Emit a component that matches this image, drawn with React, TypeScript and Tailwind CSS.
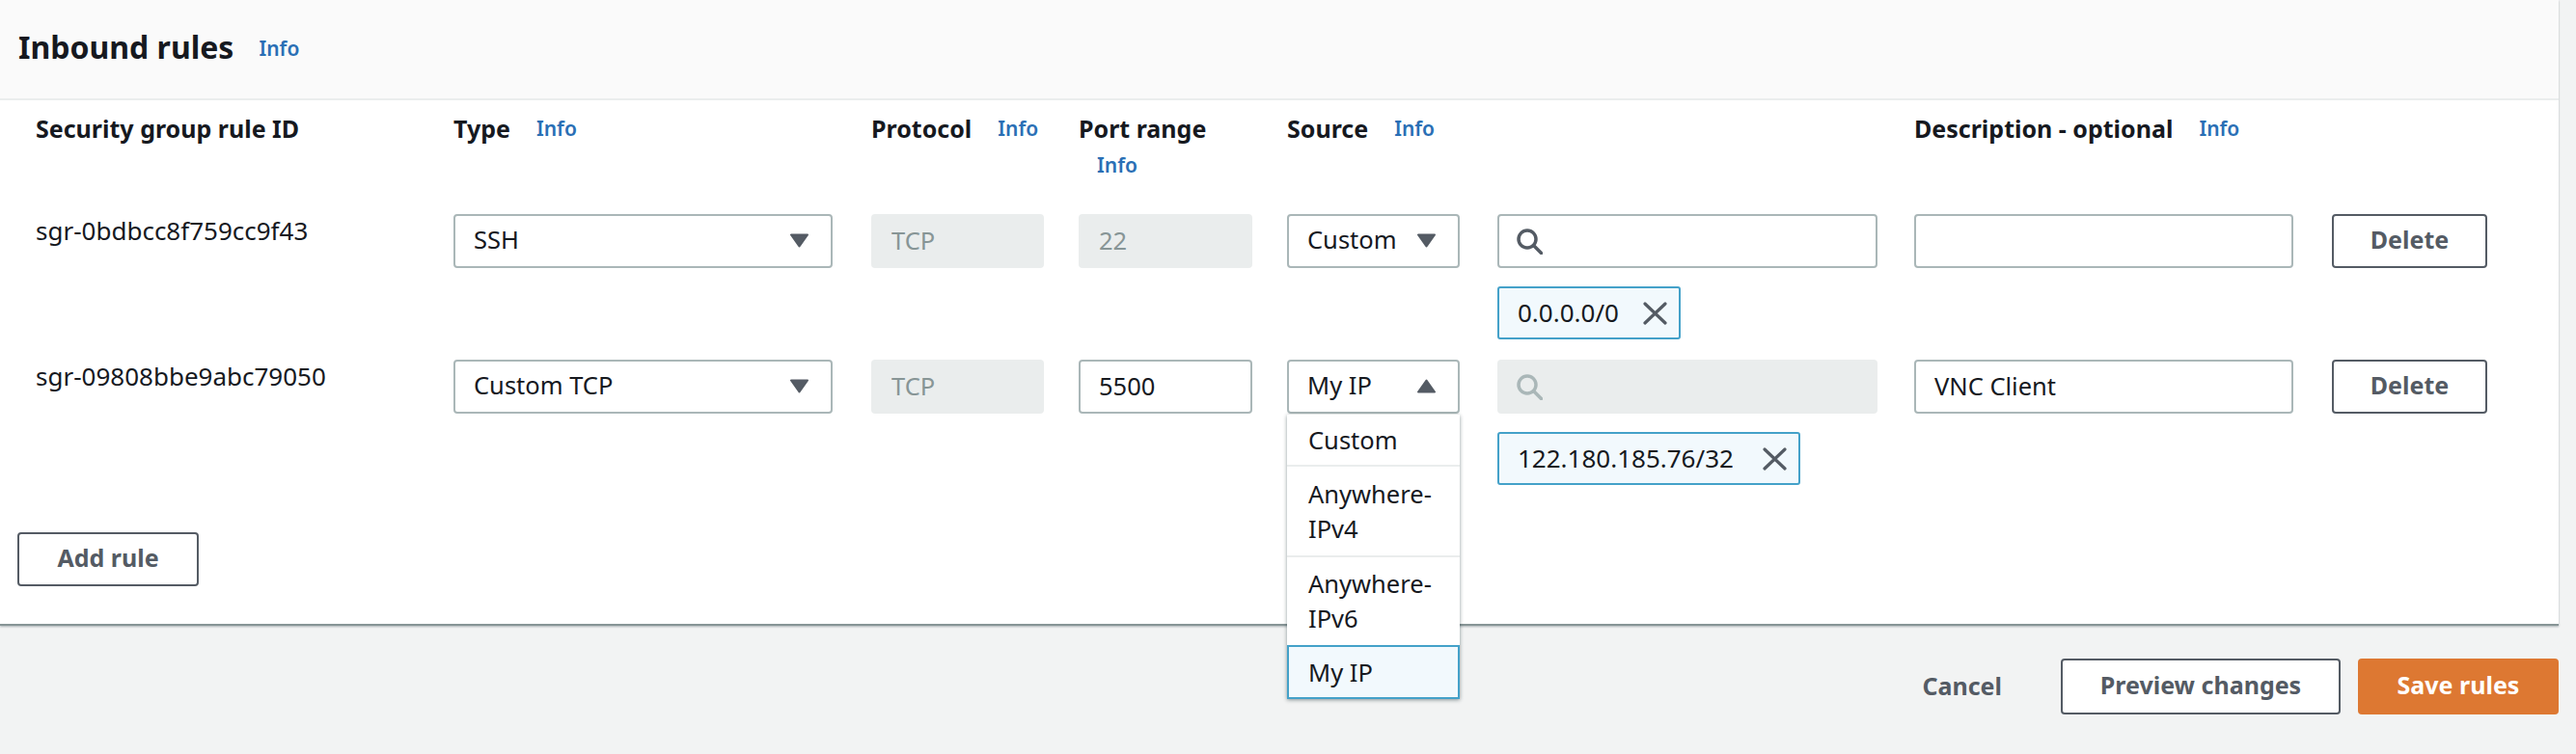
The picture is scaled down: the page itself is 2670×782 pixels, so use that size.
// Inbound rules editor (EC2 security group)
const TRACKS = "grid grid-cols-[433px_433px_215px_216px_218px_432px_433px_161px]";
const BOX = "h-[56px] border-2 border-[#aab7b8] rounded-[4px] bg-white flex items-center text-[#16191f]";
const DISABLED = "h-[56px] rounded-[4px] bg-[#eaeded] flex items-center text-[#879596] px-[21px] pb-[2px]";
const BTN = "h-[56px] border-2 border-[#545b64] rounded-[4px] bg-white text-[#545b64] text-[25px] font-bold flex items-center justify-center pb-[2px]";

function Info({ className = "ml-[27px]" }: { className?: string }) {
  return <span className={`text-[21px] font-semibold text-[#2a6fb5] ${className}`}>Info</span>;
}

function ColHead({ label, info = true }: { label: string; info?: boolean }) {
  return (
    <div className="flex items-center h-[38px] text-[25px] font-bold text-[#16191f]">
      {label}
      {info && <Info />}
    </div>
  );
}

function Caret({ up = false }: { up?: boolean }) {
  return (
    <svg width="19" height="15" viewBox="0 0 19 15" className="shrink-0 mb-[2px]">
      <path
        d={up ? "M9.5 1.5 L18 13.5 H1 Z" : "M1 1.5 H18 L9.5 13.5 Z"}
        fill="#545b64"
        stroke="#545b64"
        strokeWidth="2"
        strokeLinejoin="round"
      />
    </svg>
  );
}

function Select({ value, width, up }: { value: string; width: string; up?: boolean }) {
  return (
    <div className={`${BOX} ${width} justify-between pl-[19px] pr-[23px]`}>
      <span className="mb-[4px]">{value}</span>
      <Caret up={up} />
    </div>
  );
}

function SearchIcon({ color }: { color: string }) {
  return (
    <svg width="27" height="27" viewBox="0 0 27 27" fill="none" stroke={color} strokeWidth="3.5">
      <circle cx="11" cy="11" r="9" />
      <path d="M17.5 17.5 L25.5 25.5" strokeLinecap="round" />
    </svg>
  );
}

function Chip({ value, width }: { value: string; width: string }) {
  return (
    <div className={`h-[55px] ${width} mt-[19px] border-2 border-[#44a1c9] rounded-[3px] bg-[#f2f9fd] flex items-center justify-between pl-[19px] pr-[12px] text-[26px] text-[#16191f]`}>
      <span>{value}</span>
      <svg width="25" height="24" viewBox="0 0 25 24" stroke="#545b64" strokeWidth="3.2" strokeLinecap="round">
        <path d="M2 2 L23 22 M23 2 L2 22" />
      </svg>
    </div>
  );
}

function DropItem({ children, className }: { children: React.ReactNode; className: string }) {
  return <div className={`px-[22px] leading-[36px] ${className}`}>{children}</div>;
}

function Row({
  id,
  type,
  port,
  source,
  sourceUp,
  searchDisabled,
  chip,
  chipWidth,
  description,
  dropdown,
}: {
  id: string;
  type: string;
  port: string;
  source: string;
  sourceUp?: boolean;
  searchDisabled?: boolean;
  chip: string;
  chipWidth: string;
  description: string;
  dropdown?: boolean;
}) {
  return (
    <div className={TRACKS}>
      <div className="leading-[34px] text-[26px] text-[#16191f]">{id}</div>
      <Select value={type} width="w-[393px]" />
      <div className={`${DISABLED} w-[179px]`}>TCP</div>
      {port === "22" ? (
        <div className={`${DISABLED} w-[180px]`}>{port}</div>
      ) : (
        <div className={`${BOX} w-[180px] px-[19px] pb-[2px]`}>{port}</div>
      )}
      <div className="relative">
        <Select value={source} width="w-[179px]" up={sourceUp} />
        {dropdown && (
          <div className="absolute z-10 left-0 top-[57px] w-[179px] bg-white text-[#16191f] shadow-[0_1px_4px_rgba(0,28,36,0.45)]">
            <DropItem className="py-[8px] border-b-2 border-[#eaeded]">Custom</DropItem>
            <DropItem className="py-[10px] border-b-2 border-[#eaeded]">
              Anywhere-
              <br />
              IPv4
            </DropItem>
            <DropItem className="pt-[9px] pb-[10px]">
              Anywhere-
              <br />
              IPv6
            </DropItem>
            <DropItem className="h-[56px] flex items-center !px-[20px] border-2 border-[#44a1c9] bg-[#f2f9fd]">
              My IP
            </DropItem>
          </div>
        )}
      </div>
      <div>
        {searchDisabled ? (
          <div className="h-[56px] w-[394px] rounded-[4px] bg-[#eaeded] flex items-center pl-[20px]">
            <SearchIcon color="#aab7b8" />
          </div>
        ) : (
          <div className={`${BOX} w-[394px] pl-[18px]`}>
            <SearchIcon color="#545b64" />
          </div>
        )}
        <Chip value={chip} width={chipWidth} />
      </div>
      <div className={`${BOX} w-[393px] px-[19px] pb-[2px]`}>{description}</div>
      <div className={`${BTN} w-[161px]`}>Delete</div>
    </div>
  );
}

export default function App() {
  return (
    <div className="w-[2670px] h-[782px] bg-[#f2f3f3] font-['Noto_Sans',sans-serif] text-[25.5px]">
      <div className="w-[2652px] bg-white border-b-2 border-[#879596] shadow-[0_1px_2px_rgba(0,28,36,0.3)]">
        <div className="h-[104px] bg-[#fafafa] border-b-2 border-[#eaeded] pl-[19px] pb-[4px] flex items-center">
          <span className="text-[32px] font-bold text-[#16191f]">Inbound rules</span>
          <Info className="ml-[26px] mt-[4px]" />
        </div>
        <div className="pl-[37px] pt-[11px]">
          <div className={`${TRACKS} mb-[31px]`}>
            <ColHead label="Security group rule ID" info={false} />
            <ColHead label="Type" />
            <ColHead label="Protocol" />
            <div>
              <ColHead label="Port range" info={false} />
              <div className="flex items-center h-[38px]">
                <Info className="ml-[19px]" />
              </div>
            </div>
            <ColHead label="Source" />
            <div />
            <ColHead label="Description - optional" />
            <div />
          </div>
          <div className="flex flex-col gap-[21px]">
            <Row
              id="sgr-0bdbcc8f759cc9f43"
              type="SSH"
              port="22"
              source="Custom"
              chip="0.0.0.0/0"
              chipWidth="w-[190px]"
              description=""
            />
            <Row
              id="sgr-09808bbe9abc79050"
              type="Custom TCP"
              port="5500"
              source="My IP"
              sourceUp
              searchDisabled
              chip="122.180.185.76/32"
              chipWidth="w-[314px]"
              description="VNC Client"
              dropdown
            />
          </div>
        </div>
        <div className="pl-[18px] pt-[49px] pb-[39px]">
          <div className={`${BTN} w-[188px]`}>Add rule</div>
        </div>
      </div>
      <div className="w-[2652px] flex items-center justify-end pt-[34px]">
        <span className="text-[25px] font-bold text-[#545b64] mr-[61px]">Cancel</span>
        <div className={`${BTN} w-[290px] h-[58px]`}>Preview changes</div>
        <div className="ml-[18px] w-[208px] h-[58px] rounded-[4px] bg-[#dd7832] text-white text-[25px] font-bold flex items-center justify-center pb-[2px]">
          Save rules
        </div>
      </div>
    </div>
  );
}
